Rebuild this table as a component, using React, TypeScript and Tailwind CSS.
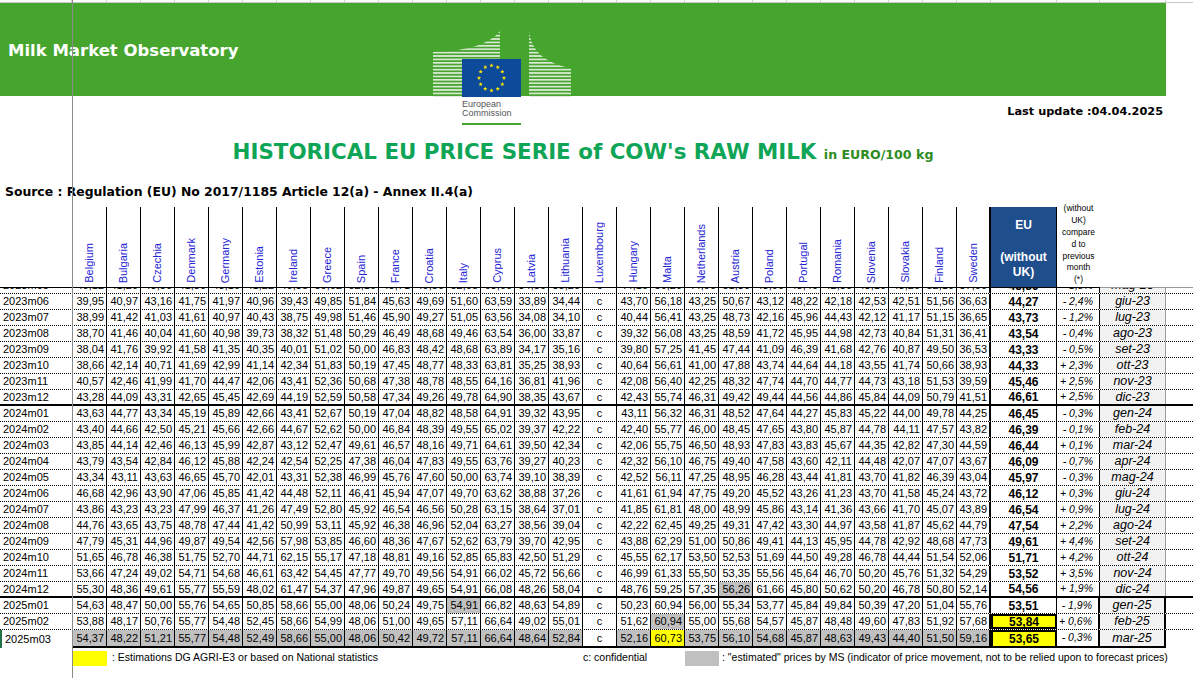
import React from "react";

const COUNTRIES = [
  "Belgium", "Bulgaria", "Czechia", "Denmark", "Germany", "Estonia", "Ireland",
  "Greece", "Spain", "France", "Croatia", "Italy", "Cyprus", "Latvia", "Lithuania",
  "Luxembourg", "Hungary", "Malta", "Netherlands", "Austria", "Poland", "Portugal",
  "Romania", "Slovenia", "Slovakia", "Finland", "Sweden",
];

type Row = {
  label: string;
  values: string[];
  eu: string;
  change: string;
  month: string;
  gray?: number[];
  yellow?: number[];
  euYellow?: boolean;
  yearEnd?: boolean;
  last?: boolean;
};

const raw: [string, string, string, string, string][] = [
  ["2023m05", "40,12 41,20 43,50 41,80 43,10 41,22 40,35 50,02 52,10 45,71 49,80 52,05 63,60 34,50 35,20 c 44,10 56,20 44,90 51,30 43,90 48,40 42,30 43,10 43,20 52,10 37,00", "45,36", "- 1,8%", "mag-23"],
  ["2023m06", "39,95 40,97 43,16 41,75 41,97 40,96 39,43 49,85 51,84 45,63 49,69 51,60 63,59 33,89 34,44 c 43,70 56,18 43,25 50,67 43,12 48,22 42,18 42,53 42,51 51,56 36,63", "44,27", "- 2,4%", "giu-23"],
  ["2023m07", "38,99 41,42 41,03 41,61 40,97 40,43 38,75 49,98 51,46 45,90 49,27 51,05 63,56 34,08 34,10 c 40,44 56,41 43,25 48,73 42,16 45,96 44,43 42,12 41,17 51,15 36,65", "43,73", "- 1,2%", "lug-23"],
  ["2023m08", "38,70 41,46 40,04 41,60 40,98 39,73 38,32 51,48 50,29 46,49 48,68 49,46 63,54 36,00 33,87 c 39,32 56,08 43,25 48,59 41,72 45,95 44,98 42,73 40,84 51,31 36,41", "43,54", "- 0,4%", "ago-23"],
  ["2023m09", "38,04 41,76 39,92 41,58 41,35 40,35 40,01 51,02 50,00 46,83 48,42 48,68 63,89 34,17 35,16 c 39,80 57,25 41,45 47,44 41,09 46,39 41,68 42,76 40,87 49,50 36,53", "43,33", "- 0,5%", "set-23"],
  ["2023m10", "38,66 42,14 40,71 41,69 42,99 41,14 42,34 51,83 50,19 47,45 48,77 48,33 63,81 35,25 38,93 c 40,64 56,61 41,00 47,88 43,74 44,64 44,18 43,55 41,74 50,66 38,93", "44,33", "+ 2,3%", "ott-23"],
  ["2023m11", "40,57 42,46 41,99 41,70 44,47 42,06 43,41 52,36 50,68 47,38 48,78 48,55 64,16 36,81 41,96 c 42,08 56,40 42,25 48,32 47,74 44,70 44,77 44,73 43,18 51,53 39,59", "45,46", "+ 2,5%", "nov-23"],
  ["2023m12", "43,28 44,09 43,31 42,65 45,45 42,69 44,19 52,59 50,58 47,34 49,26 49,78 64,90 38,35 43,67 c 42,43 55,74 46,31 49,42 49,44 44,56 44,86 45,84 44,09 50,79 41,51", "46,61", "+ 2,5%", "dic-23"],
  ["2024m01", "43,63 44,77 43,34 45,19 45,89 42,66 43,41 52,67 50,19 47,04 48,82 48,58 64,91 39,32 43,95 c 43,11 56,32 46,31 48,52 47,64 44,27 45,83 45,22 44,00 49,78 44,25", "46,45", "- 0,3%", "gen-24"],
  ["2024m02", "43,40 44,66 42,50 45,21 45,66 42,66 44,67 52,62 50,00 46,84 48,39 49,55 65,02 39,37 42,22 c 42,40 55,77 46,00 48,45 47,65 43,80 45,87 44,78 44,11 47,57 43,82", "46,39", "- 0,1%", "feb-24"],
  ["2024m03", "43,85 44,14 42,46 46,13 45,99 42,87 43,12 52,47 49,61 46,57 48,16 49,71 64,61 39,50 42,34 c 42,06 55,75 46,50 48,93 47,83 43,83 45,67 44,35 42,82 47,30 44,59", "46,44", "+ 0,1%", "mar-24"],
  ["2024m04", "43,79 43,54 42,84 46,12 45,88 42,24 42,54 52,25 47,38 46,04 47,83 49,55 63,76 39,27 40,23 c 42,32 56,10 46,75 49,40 47,58 43,60 42,11 44,48 42,07 47,07 43,67", "46,09", "- 0,7%", "apr-24"],
  ["2024m05", "43,34 43,11 43,63 46,65 45,70 42,01 43,31 52,38 46,99 45,76 47,60 50,00 63,74 39,10 38,39 c 42,52 56,11 47,25 48,95 46,28 43,44 41,81 43,70 41,82 46,39 43,04", "45,97", "- 0,3%", "mag-24"],
  ["2024m06", "46,68 42,96 43,90 47,06 45,85 41,42 44,48 52,11 46,41 45,94 47,07 49,70 63,62 38,88 37,26 c 41,61 61,94 47,75 49,20 45,52 43,26 41,23 43,70 41,58 45,24 43,72", "46,12", "+ 0,3%", "giu-24"],
  ["2024m07", "43,86 43,23 43,23 47,99 46,37 41,26 47,49 52,80 45,92 46,54 46,56 50,28 63,15 38,64 37,01 c 41,85 61,81 48,00 48,99 45,86 43,14 41,36 43,66 41,70 45,07 43,89", "46,54", "+ 0,9%", "lug-24"],
  ["2024m08", "44,76 43,65 43,75 48,78 47,44 41,42 50,99 53,11 45,92 46,38 46,96 52,04 63,27 38,56 39,04 c 42,22 62,45 49,25 49,31 47,42 43,30 44,97 43,58 41,87 45,62 44,79", "47,54", "+ 2,2%", "ago-24"],
  ["2024m09", "47,79 45,31 44,96 49,87 49,54 42,56 57,98 53,85 46,60 48,36 47,67 52,62 63,79 39,70 42,95 c 43,88 62,29 51,00 50,86 49,41 44,13 45,95 44,78 42,92 48,68 47,73", "49,61", "+ 4,4%", "set-24"],
  ["2024m10", "51,65 46,78 46,38 51,75 52,70 44,71 62,15 55,17 47,18 48,81 49,16 52,85 65,83 42,50 51,29 c 45,55 62,17 53,50 52,53 51,69 44,50 49,28 46,78 44,44 51,54 52,06", "51,71", "+ 4,2%", "ott-24"],
  ["2024m11", "53,66 47,24 49,02 54,71 54,68 46,61 63,42 54,45 47,77 49,70 49,56 54,91 66,02 45,72 56,66 c 46,99 61,33 55,50 53,35 55,56 45,64 46,70 50,20 45,76 51,32 54,29", "53,52", "+ 3,5%", "nov-24"],
  ["2024m12", "55,30 48,36 49,61 55,77 55,59 48,02 61,47 54,37 47,96 49,87 49,65 54,91 66,08 48,26 58,04 c 48,76 59,25 57,35 56,26 61,66 45,80 50,62 50,20 46,78 50,80 52,14", "54,56", "+ 1,9%", "dic-24"],
  ["2025m01", "54,63 48,47 50,00 55,76 54,65 50,85 58,66 55,00 48,06 50,24 49,75 54,91 66,82 48,63 54,89 c 50,23 60,94 56,00 55,34 53,77 45,84 49,84 50,39 47,20 51,04 55,76", "53,51", "- 1,9%", "gen-25"],
  ["2025m02", "53,88 48,17 50,76 55,77 54,48 52,45 58,66 54,99 48,06 51,00 49,65 57,11 66,64 49,02 55,01 c 51,62 60,94 55,00 55,68 54,57 45,87 48,48 49,60 47,83 51,92 57,68", "53,84", "+ 0,6%", "feb-25"],
  ["2025m03", "54,37 48,22 51,21 55,77 54,48 52,49 58,66 55,00 48,06 50,42 49,72 57,11 66,64 48,64 52,84 c 52,16 60,73 53,75 56,10 54,68 45,87 48,63 49,43 44,40 51,50 59,16", "53,65", "- 0,3%", "mar-25"],
];

const ROWS: Row[] = raw.map(([label, vals, eu, change, month]) => ({
  label,
  values: vals.split(" "),
  eu,
  change,
  month,
}));

const extra: Record<string, Partial<Row>> = {
  "2023m12": { yearEnd: true },
  "2024m12": { yearEnd: true, gray: [19] },
  "2025m01": { gray: [11] },
  "2025m02": { gray: [17], euYellow: true },
  "2025m03": {
    gray: COUNTRIES.map((_, i) => i).filter((i) => i !== 15 && i !== 17),
    yellow: [17],
    euYellow: true,
    last: true,
  },
};
ROWS.forEach((r) => Object.assign(r, extra[r.label] ?? {}));

const colW = (i: number) => (i === 0 ? "w-[35px]" : "w-[34px]");

function DataRow({ row }: { row: Row }) {
  const rowBorder = row.last
    ? "h-[18px]"
    : row.yearEnd
      ? "h-[16px] border-b-2 border-black"
      : "h-[16px] border-b border-dotted border-black";
  const cellBottom = row.last ? "border-b-2" : "";
  const is2025 = row.label.startsWith("2025");

  return (
    <div className={`flex ${rowBorder}`}>
      <div
        className={`flex w-[72px] items-center pl-[3px] text-[11px] ${row.last ? "border-l-2 border-[#217346]" : ""}`}
      >
        {row.label}
      </div>
      {row.values.map((v, i) => {
        const bg = row.yellow?.includes(i)
          ? "bg-[#ffff00]"
          : row.gray?.includes(i)
            ? "bg-[#c0c0c0]"
            : "";
        return (
          <div
            key={i}
            className={`${colW(i)} flex items-center border-black text-[11px] ${i === 26 ? "border-r-2" : "border-r"} ${cellBottom} ${
              v === "c" ? "justify-center" : "justify-end pr-[2px]"
            } ${bg}`}
          >
            {v}
          </div>
        );
      })}
      <div
        className={`flex w-[66px] items-center justify-center border-black text-[12px] font-bold ${
          row.euYellow ? "border-2 bg-[#ffff00]" : `border-r ${cellBottom}`
        }`}
      >
        {row.eu}
      </div>
      <div
        className={`flex w-[43px] items-center justify-end border-black pr-[6px] text-[10.5px] italic ${is2025 ? "border-r-2" : "border-r"} ${cellBottom}`}
      >
        {row.change}
      </div>
      <div
        className={`flex w-[66px] items-center justify-center bg-[#f2f2f2] text-[12.5px] italic ${
          is2025 ? "border-r-2 border-black" : "border-r border-[#9a9a9a]"
        } ${cellBottom} ${cellBottom ? "border-black" : ""}`}
      >
        {row.month}
      </div>
    </div>
  );
}

function starPoints(cx: number, cy: number, R: number) {
  const pts: string[] = [];
  for (let k = 0; k < 10; k++) {
    const r = k % 2 === 0 ? R : R * 0.42;
    const a = (Math.PI / 5) * k - Math.PI / 2;
    pts.push(`${(cx + r * Math.cos(a)).toFixed(2)},${(cy + r * Math.sin(a)).toFixed(2)}`);
  }
  return pts.join(" ");
}

function EcLogo() {
  const stars = Array.from({ length: 12 }, (_, k) => {
    const a = (k * 30 * Math.PI) / 180;
    return [58.5 + 12.5 * Math.sin(a), 50 - 12.5 * Math.cos(a)];
  });
  return (
    <div className="absolute left-[433px] top-[28px] h-[100px] w-[140px]">
      <svg width="140" height="70" viewBox="0 0 140 70">
        <defs>
          <pattern id="ecStripes" width="4" height="3.4" patternUnits="userSpaceOnUse">
            <rect width="4" height="1.6" fill="#e3ecdf" />
          </pattern>
        </defs>
        <path d="M0,24 C30,23 55,18 67,3 L67,69 L0,69 Z" fill="url(#ecStripes)" />
        <path d="M96,2 C98,25 115,36 138,40 L138,69 L96,69 Z" fill="url(#ecStripes)" />
        <rect x="29" y="31" width="59" height="38" fill="#0d4a99" />
        {stars.map(([x, y], i) => (
          <polygon key={i} points={starPoints(x, y, 2.3)} fill="#ffe500" />
        ))}
      </svg>
      <div className="ml-[29px] mt-[2px] font-['Liberation_Sans',sans-serif] text-[9px] leading-[9px] text-[#555]">
        <div>European</div>
        <div>Commission</div>
      </div>
      <div className="ml-[29px] mt-[5px] h-[2px] w-[59px] bg-[#45a52d]" />
    </div>
  );
}

export default function App() {
  const may = ROWS[0];
  const rows = ROWS.slice(1);

  return (
    <div className="relative h-[678px] w-[1193px] overflow-hidden bg-white font-['Liberation_Sans',Arial,sans-serif] text-black">
      {/* grid strip */}
      <div className="flex h-[3px] border-b border-[#c8c8c8]">
        <div className="w-[72px] border-r border-[#d0d0d0]" />
        {COUNTRIES.map((c, i) => (
          <div key={c} className={`${colW(i)} border-r border-[#d0d0d0]`} />
        ))}
        <div className="w-[66px] border-r border-[#d0d0d0]" />
        <div className="w-[43px] border-r border-[#d0d0d0]" />
        <div className="w-[66px] border-r border-[#d0d0d0]" />
      </div>

      {/* banner */}
      <div className="flex h-[93px] w-[1166px] items-center bg-[#45a52d] pl-[8px] pt-[3px]">
        <span className="font-['DejaVu_Sans',Verdana,sans-serif] text-[16.5px] font-bold text-white">
          Milk Market Observatory
        </span>
      </div>
      <EcLogo />

      <div className="flex h-[111px] w-[1166px] flex-col font-['DejaVu_Sans',Verdana,sans-serif] font-bold">
        <div className="mt-[8px] pr-[3px] text-right text-[11.3px] leading-[16px]">
          Last update :04.04.2025
        </div>
        <div className="mt-[18px] text-center leading-[28px]">
          <span className="text-[21.4px] text-[#0ea556]">HISTORICAL EU PRICE SERIE of COW's RAW MILK </span>
          <span className="text-[12.6px] text-[#2e8b1e]">in EURO/100 kg</span>
        </div>
        <div className="mt-[15px] pl-[5px] text-[12.4px] leading-[16px]">
          Source : Regulation (EU) No 2017/1185 Article 12(a) - Annex II.4(a)
        </div>
      </div>

      {/* header */}
      <div className="flex h-[80px]">
        <div className="w-[72px]" />
        {COUNTRIES.map((c, i) => (
          <div
            key={c}
            className={`${colW(i)} flex items-end justify-center border-black pb-[4px] ${i === 26 ? "border-r-2" : "border-r"}`}
          >
            <span className="rotate-180 text-[11px] leading-none text-[#2323d4] [writing-mode:vertical-rl]">
              {c}
            </span>
          </div>
        ))}
        <div className="flex w-[66px] flex-col items-center border-r border-black bg-[#1f4e8c] pt-[11px] text-[12px] font-bold leading-[15px] text-white">
          <div>EU</div>
          <div className="mt-[17px]">(without</div>
          <div>UK)</div>
        </div>
        <div className="flex w-[43px] flex-col items-center justify-end pb-[1px] text-center text-[8.5px] leading-[11.8px]">
          <div>(without</div>
          <div>UK)</div>
          <div>compare</div>
          <div>d to</div>
          <div>previous</div>
          <div>month</div>
          <div>(*)</div>
        </div>
        <div className="w-[66px]" />
      </div>
      <div className="flex h-px">
        <div className="w-[1100px] bg-black" />
        <div className="flex-1 bg-[#9a9a9a]" />
      </div>

      {/* partially hidden row behind freeze pane */}
      <div className="h-[6px] overflow-hidden">
        <div className="-mt-[10px]">
          <DataRow row={may} />
        </div>
      </div>

      {rows.map((r) => (
        <DataRow key={r.label} row={r} />
      ))}

      {/* legend */}
      <div className="flex h-[20px] items-center text-[10.5px]">
        <div className="w-[72px]" />
        <div className="h-[15px] w-[35px] bg-[#ffff00]" />
        <div className="w-[476px] pl-[5px]">: Estimations DG AGRI-E3 or based on National statistics</div>
        <div className="w-[102px]">c: confidential</div>
        <div className="h-[15px] w-[34px] bg-[#c0c0c0]" />
        <div className="pl-[3px]">
          : "estimated" prices by MS (indicator of price movement, not to be relied upon to forecast prices)
        </div>
      </div>

      {/* freeze pane divider */}
      <div className="absolute bottom-0 left-[72px] top-0 w-px bg-[#8a8a8a]" />
    </div>
  );
}
